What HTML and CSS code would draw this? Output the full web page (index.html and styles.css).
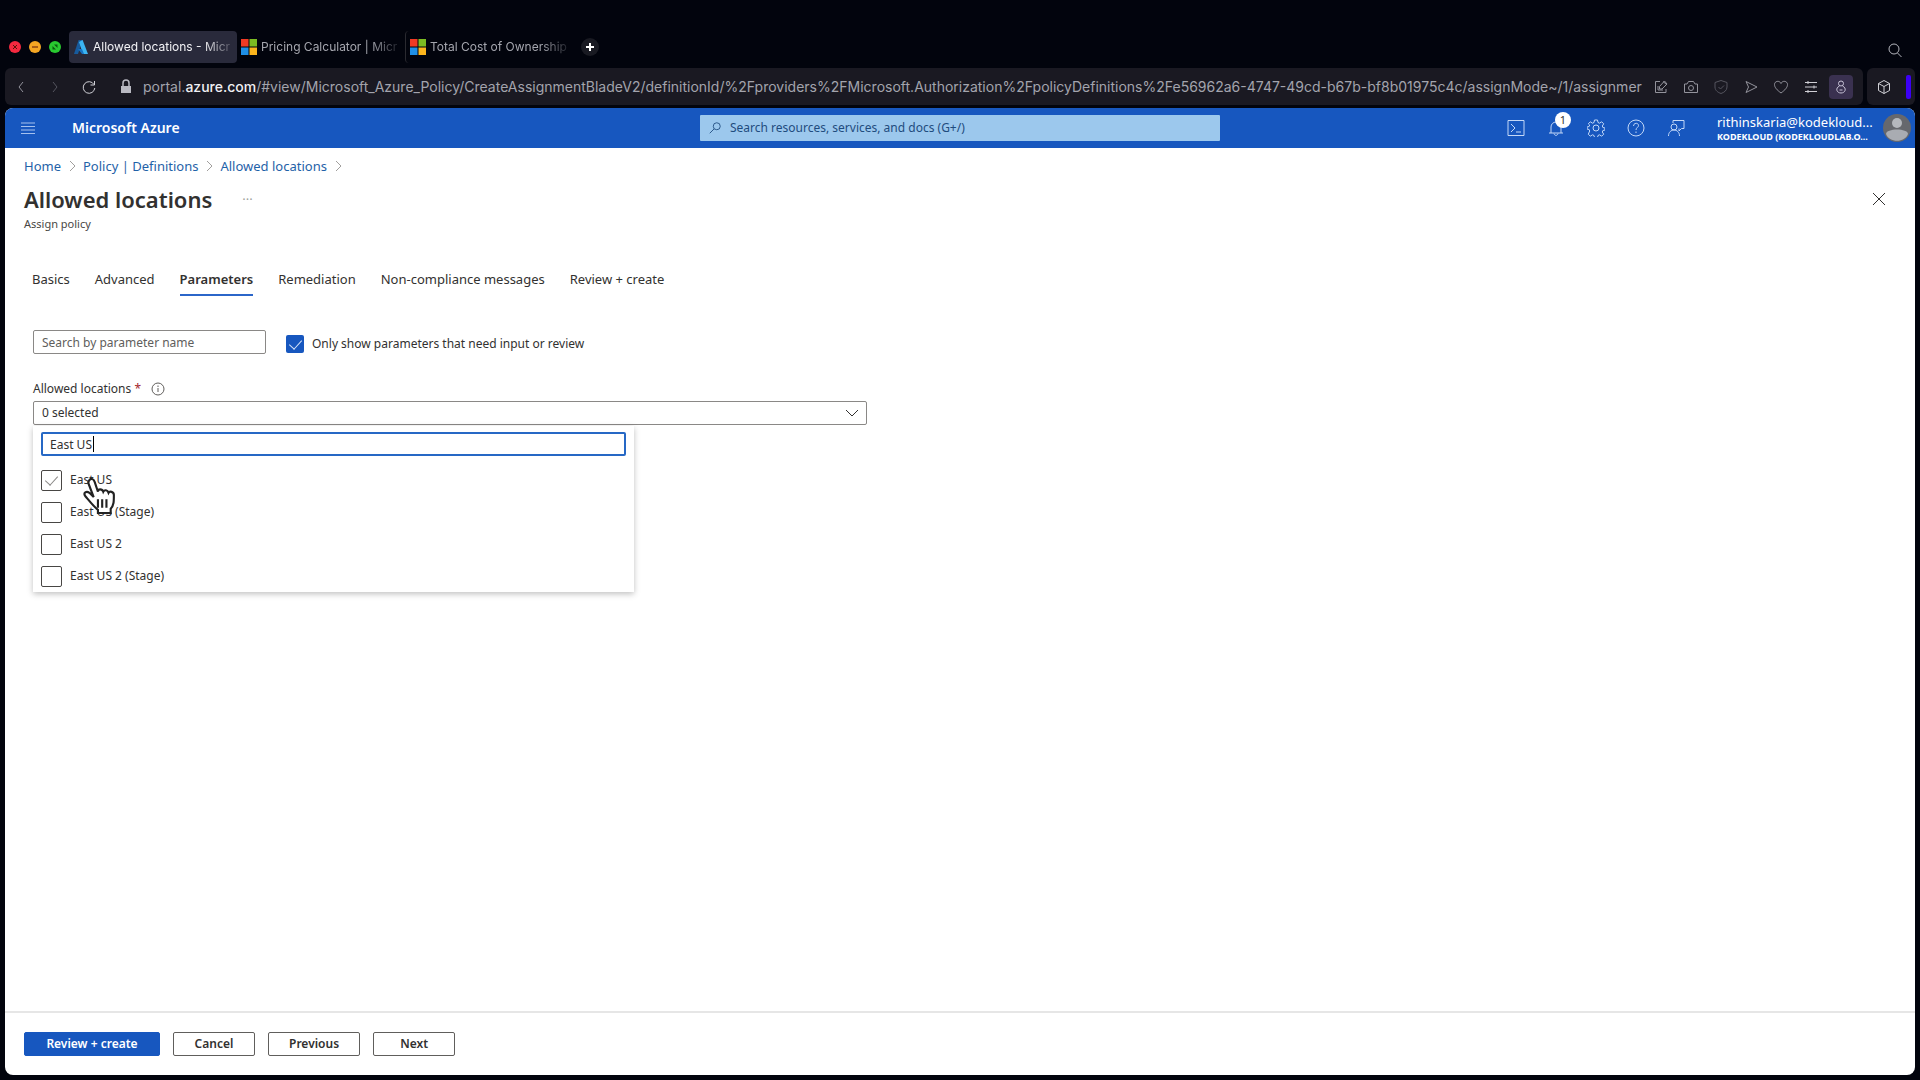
FILE: index.html
```html
<!DOCTYPE html>
<html lang="en">
<head>
    <meta charset="utf-8">
    <title>Allowed locations - Microsoft Azure</title>
    <link rel="stylesheet" href="styles.css">
</head>
<body>

<div class="tab-strip">
    <div class="lights">
        <button class="light red" aria-label="Close window"><svg viewBox="0 0 12 12"><path d="M4 4l4 4M8 4l-4 4"/></svg></button>
        <button class="light yellow" aria-label="Minimize window"><svg viewBox="0 0 12 12"><path d="M3 6h6"/></svg></button>
        <button class="light green" aria-label="Zoom window"><svg viewBox="0 0 12 12"><path fill="currentColor" stroke="none" d="M3.500 5v3.500H7zM5 3.500h3.500V7z"/></svg></button>
    </div>
    <div class="tabs">
        <a href="#" class="tab active">
            <svg class="favicon" viewBox="0 0 16 16"><path fill="#175a9c" d="M5.600 1h4L5 15H1z"/><path fill="#3bb4f2" d="M9.600 1l5.400 14H10L6 3z"/><path fill="#1673c4" d="M5 10h4l2 5H9z"/></svg>
            <span>Allowed locations - Micr</span>
        </a>
        <a href="#" class="tab">
            <svg class="favicon" viewBox="0 0 16 16"><path fill="#f03a24" d="M0 0h7.500v7.500H0z"/><path fill="#7cbb22" d="M8.500 0H16v7.500H8.500z"/><path fill="#1f8fe6" d="M0 8.500h7.500V16H0z"/><path fill="#fcb51c" d="M8.500 8.500H16V16H8.500z"/></svg>
            <span>Pricing Calculator | Micr</span>
        </a>
        <a href="#" class="tab divided">
            <svg class="favicon" viewBox="0 0 16 16"><path fill="#f03a24" d="M0 0h7.500v7.500H0z"/><path fill="#7cbb22" d="M8.500 0H16v7.500H8.500z"/><path fill="#1f8fe6" d="M0 8.500h7.500V16H0z"/><path fill="#fcb51c" d="M8.500 8.500H16V16H8.500z"/></svg>
            <span>Total Cost of Ownership</span>
        </a>
    </div>
    <button class="new-tab" aria-label="New tab"><svg viewBox="0 0 16 16"><path d="M8 4v8M4 8h8"/></svg></button>
    <button class="tab-search" aria-label="Search tabs"><svg viewBox="0 0 16 16"><circle cx="7" cy="7" r="5"/><path d="M10.500 11l4 4"/></svg></button>
</div>

<div class="toolbar">
    <div class="address">
        <div class="nav">
            <button aria-label="Back"><svg viewBox="0 0 16 16"><path d="M10 3L6 8l4 5"/></svg></button>
            <button class="dim" aria-label="Forward"><svg viewBox="0 0 16 16"><path d="M6 3l4 5-4 5"/></svg></button>
            <button class="bright" aria-label="Reload"><svg viewBox="0 0 16 16"><path d="M13 5.500A5.800 5.800 0 1 0 13.800 9M13.500 2v4H9.500"/></svg></button>
        </div>
        <svg class="lock" viewBox="0 0 16 16"><path fill="#b9b9c2" d="M3 7h10v7H3z"/><path fill="none" stroke="#b9b9c2" stroke-width="1.500" d="M5 7V4a3 3 0 0 1 6 0v3"/></svg>
        <div class="url">portal.<b>azure.com</b>/#view/Microsoft_Azure_Policy/CreateAssignmentBladeV2/definitionId/%2Fproviders%2FMicrosoft.Authorization%2FpolicyDefinitions%2Fe56962a6-4747-49cd-b67b-bf8b01975c4c/assignMode~/1/assignmer</div>
        <div class="tools">
            <button aria-label="Share"><svg viewBox="0 0 16 16"><path d="M7 2.500H2.500v11H13V10M10 2.500l3.500 3M11.500 2L6.500 7.500V10H9l5-5zM5 7v4h5"/></svg></button>
            <button aria-label="Snapshot"><svg viewBox="0 0 16 16"><path d="M1.500 5H4l1.500-2.500h5L12 5h2.500v8.500h-13z"/><circle cx="8" cy="9" r="2.500"/></svg></button>
            <button class="dim" aria-label="Ad blocker"><svg viewBox="0 0 16 16"><path d="M8 1.500l6 2V8c0 3.500-3 5.500-6 6.500C5 13.500 2 11.500 2 8V3.500zM5.500 8l2 2 3.500-3.500"/></svg></button>
            <button aria-label="Send"><svg viewBox="0 0 16 16"><path d="M3 2.500L14 8 3 13.500 5.500 8z"/></svg></button>
            <button aria-label="Favourite"><svg viewBox="0 0 16 16"><path d="M8 14C4 11 1.500 8.500 1.500 5.500c0-3.500 5-4.500 6.500-1 1.500-3.500 6.500-2.500 6.500 1C14.500 8.500 12 11 8 14z"/></svg></button>
            <button class="bright" aria-label="Settings"><svg viewBox="0 0 16 16"><path d="M2 3.500h12M2 8h12M2 12.500h12M5 2v3M11 6.500v3M5 11v3"/></svg></button>
            <button class="boxed" aria-label="Profile"><svg viewBox="0 0 16 16"><circle cx="8" cy="4.500" r="2.500"/><path d="M6.500 7C2 9 3.500 14 8 14s6-5 1.500-7M6.500 11h3"/></svg></button>
        </div>
    </div>
    <div class="extensions">
        <button class="bright" aria-label="Extensions"><svg viewBox="0 0 16 16"><path d="M8 1.500l5.500 3v7L8 14.500l-5.500-3v-7zM2.500 4.500L8 7.500l5.500-3M8 7.500v7"/></svg></button>
        <span class="marker"></span>
    </div>
</div>

<div class="portal">
    <header class="portal-bar">
        <button class="menu" aria-label="Show portal menu"><svg viewBox="0 0 16 16"><path d="M1 3h14M1 6.500h14M1 10h14M1 13.500h14"/></svg></button>
        <a href="#" class="brand">Microsoft Azure</a>
        <label class="search">
            <svg viewBox="0 0 16 16"><circle cx="10" cy="6" r="4"/><path d="M7 9l-5 5"/></svg>
            <input type="text" aria-label="Search resources" placeholder="Search resources, services, and docs (G+/)">
        </label>
        <div class="actions">
            <div class="icons">
                <button aria-label="Cloud Shell"><svg viewBox="0 0 18 18"><path d="M1 1.500h16v15H1zM4 5l4 4-4 4M9 13h5"/></svg></button>
                <button aria-label="Notifications"><svg viewBox="0 0 18 18"><path d="M2 14h14M4 14V8a5 5 0 0 1 10 0v6M7 14.500c.5 2.500 3.500 2.500 4 0"/></svg><span class="badge">1</span></button>
                <button aria-label="Settings"><svg viewBox="0 0 18 18"><path d="M7.500 1h3l.5 2.500 1.500.7 2.200-1.400 2 2-1.400 2.200.6 1.500 2.100.5v2l-2.100.5-.6 1.500 1.400 2.200-2 2-2.200-1.400-1.500.7-.5 2h-3l-.5-2-1.500-.7-2.200 1.400-2-2L2.700 12l-.6-1.500L0 10V8l2.100-.5L2.700 6 1.300 4.800l2-2 2.200 1.400L7 3.500z"/><circle cx="9" cy="9" r="3"/></svg></button>
                <button aria-label="Help"><svg viewBox="0 0 18 18"><circle cx="9" cy="9" r="8"/><path d="M6.500 7c0-3.500 5-3.500 5-.5 0 2-2.500 2-2.500 4.500M9 12.500V14"/></svg></button>
                <button aria-label="Feedback"><svg viewBox="0 0 18 18"><path d="M6 4V1.500h11v8h-2.500L12 12V9.500"/><circle cx="7" cy="8" r="3"/><path d="M1.500 17c0-8 11-8 11 0"/></svg></button>
            </div>
            <button class="account">
                <span class="who">
                    <span class="mail">rithinskaria@kodekloud...</span>
                    <span class="org">KODEKLOUD (KODEKLOUDLAB.O...</span>
                </span>
                <svg viewBox="0 0 28 28"><circle cx="14" cy="14" r="14" fill="#66686d"/><circle cx="14" cy="9" r="5" fill="#b5b8bd"/><path fill="#a9acb2" d="M3 20c0-6 22-6 22 0-3 9-19 9-22 0z"/></svg>
            </button>
        </div>
    </header>

    <nav class="breadcrumb">
        <a href="#">Home</a>
        <svg viewBox="0 0 8 12"><path d="M2 1l5 5-5 5"/></svg>
        <a href="#">Policy | Definitions</a>
        <svg viewBox="0 0 8 12"><path d="M2 1l5 5-5 5"/></svg>
        <a href="#">Allowed locations</a>
        <svg viewBox="0 0 8 12"><path d="M2 1l5 5-5 5"/></svg>
    </nav>

    <div class="title-row">
        <h1>Allowed locations</h1>
        <button class="more" aria-label="More">&middot;&middot;&middot;</button>
        <button class="close" aria-label="Close"><svg viewBox="0 0 14 14"><path d="M1 1l12 12M13 1L1 13"/></svg></button>
    </div>
    <p class="subtitle">Assign policy</p>

    <nav class="steps">
        <a href="#">Basics</a>
        <a href="#">Advanced</a>
        <a href="#" class="current">Parameters</a>
        <a href="#">Remediation</a>
        <a href="#">Non-compliance messages</a>
        <a href="#">Review + create</a>
    </nav>

    <main>
        <div class="filters">
            <input type="text" class="field" aria-label="Search by parameter name" placeholder="Search by parameter name">
            <label class="check"><input type="checkbox" class="solid" checked>Only show parameters that need input or review</label>
        </div>

        <div class="caption">
            <label for="locations">Allowed locations <span class="required">*</span></label>
            <svg viewBox="0 0 14 14"><circle cx="7" cy="7" r="6"/><path d="M7 6v4M7 3.500V5"/></svg>
        </div>
        <div class="picker">
            <select id="locations"><option>0 selected</option></select>
            <svg class="chevron" viewBox="0 0 14 8"><path d="M1 1l6 6 6-6"/></svg>
            <div class="dropdown">
                <div class="typed">
                    <input type="text" aria-label="Filter locations" value="East US">
                    <span class="caret"></span>
                </div>
                <label class="option"><input type="checkbox" checked>East US</label>
                <label class="option"><input type="checkbox">East US (Stage)</label>
                <label class="option"><input type="checkbox">East US 2</label>
                <label class="option"><input type="checkbox">East US 2 (Stage)</label>
                <!-- hand pointer -->
                <svg class="pointer" viewBox="0 0 32 36"><path d="M7 3C9 1 11 2 12 5l3 9c0-3 4-3 5 0 1-2 4-2 5 1 1-2 5-1 5 2 0 6 0 10-3 13v4H15v-3c-4-3-7-7-12-13-2-3 1-5 4-3l4 4L6 6c0-1 0-2 1-3z"/><path d="M15 21v8M19 21v8M23 21v8"/></svg>
            </div>
        </div>
    </main>

    <footer>
        <button class="btn primary">Review + create</button>
        <button class="btn">Cancel</button>
        <button class="btn">Previous</button>
        <button class="btn">Next</button>
    </footer>
</div>

</body>
</html>
```
FILE: styles.css
```css
* {
    box-sizing: border-box;
}

body {
    margin: 0;
    padding: 28px 5px 5px;
    min-height: 100vh;
    display: flex;
    flex-direction: column;
    background: #02040d;
    color: #323130;
    font: 12px/16px "Noto Sans", "Open Sans", sans-serif;
}

button, input, select {
    font: inherit;
    color: inherit;
    margin: 0;
    padding: 0;
}

button {
    display: flex;
    align-items: center;
    justify-content: center;
    background: none;
    border: 0;
}

a {
    color: inherit;
    text-decoration: none;
}

svg {
    flex: none;
    fill: none;
    stroke: currentColor;
}

/* browser window */
.tab-strip {
    display: flex;
    align-items: center;
    height: 38px;
    padding: 0 12px 0 4px;
    color: #a5a6ae;
    font-family: Inter, sans-serif;
}

.lights {
    display: flex;
    gap: 8px;
    width: 60px;
}

.light {
    width: 12px;
    height: 12px;
    border-radius: 50%;
    color: #5a1408;
}

.light svg {
    width: 12px;
    height: 12px;
}

.red { background: #f5293f; }
.yellow { background: #f5a623; }
.green { background: #29c930; color: #0b5a10; }

.tabs {
    display: flex;
}

.tab {
    display: flex;
    align-items: center;
    gap: 4px;
    width: 168px;
    height: 32px;
    padding: 0 4px;
    border-radius: 4px;
}

.tab span {
    white-space: nowrap;
    -webkit-mask-image: linear-gradient(to right, #000 80%, rgba(0, 0, 0, .2));
    mask-image: linear-gradient(to right, #000 80%, rgba(0, 0, 0, .2));
}

.tab.active {
    background: #292a3b;
    color: #f2f2f5;
}

.tab.divided {
    border-left: 1px solid #2a2a30;
}

.favicon {
    width: 16px;
    height: 16px;
    stroke: none;
}

.new-tab {
    width: 18px;
    height: 18px;
    margin-left: 8px;
    border-radius: 50%;
    background: #191a22;
    color: #fff;
    stroke-width: 2;
}

.tab-search {
    margin-left: auto;
    margin-top: 6px;
    color: #b4b5bc;
}

.new-tab svg, .tab-search svg {
    width: 16px;
    height: 16px;
}

.toolbar {
    display: flex;
    gap: 4px;
    height: 42px;
    padding-top: 2px;
    padding-bottom: 3px;
}

.address, .extensions {
    display: flex;
    align-items: center;
    background: #1a1922;
    border-radius: 6px;
    color: #93939c;
}

.address {
    flex: 1;
    min-width: 0;
    overflow: hidden;
    padding: 0 14px 0 8px;
}

.toolbar svg {
    width: 16px;
    height: 16px;
}

.nav {
    display: flex;
    gap: 18px;
}

.dim { color: #55555f; }
.bright { color: #d0d0d6; }

.toolbar .lock {
    margin: 0 9px 0 21px;
    stroke: none;
}

.url {
    flex: 1;
    min-width: 0;
    white-space: nowrap;
    font: 14px/20px Inter, sans-serif;
    color: #a3a4ad;
}

.url b {
    font-weight: 500;
    color: #f0f0f4;
}

.tools {
    display: flex;
    align-items: center;
    gap: 14px;
    padding-left: 8px;
}

.boxed {
    width: 24px;
    height: 24px;
    margin: 0 -4px;
    border-radius: 4px;
    background: #3a3150;
    color: #c9c4d8;
}

.extensions {
    width: 48px;
    justify-content: flex-end;
    gap: 14px;
    padding-right: 4px;
}

.marker {
    width: 5px;
    height: 24px;
    border-radius: 2px;
    background: #3c00f5;
}

/* portal */
.portal {
    flex: 1;
    display: flex;
    flex-direction: column;
    overflow: hidden;
    background: #fff;
    border-radius: 8px;
}

.portal-bar {
    display: grid;
    grid-template-columns: 1fr 520px 1fr;
    align-items: center;
    position: relative;
    height: 40px;
    background: #1757bf;
    color: #fff;
}

.portal-bar svg {
    width: 18px;
    height: 18px;
}

.portal-bar .menu {
    position: absolute;
    left: 15px;
    color: #a5c1ee;
}

.portal-bar .menu svg {
    width: 16px;
    height: 16px;
}

.brand {
    padding-left: 67px;
    font-size: 14px;
    font-weight: 600;
}

.search {
    display: flex;
    align-items: center;
    gap: 8px;
    height: 26px;
    padding: 0 8px;
    border-radius: 1px;
    background: #9cc8ed;
    color: #1f4c7e;
}

.portal-bar .search svg {
    width: 14px;
    height: 14px;
}

.search input {
    flex: 1;
    border: 0;
    background: none;
    outline: 0;
}

.search input::placeholder {
    color: #1f4c7e;
}

.actions, .icons, .account {
    display: flex;
    align-items: center;
}

.actions {
    justify-content: flex-end;
    gap: 32px;
    padding-right: 4px;
}

.icons {
    gap: 22px;
    color: #c3d8f7;
}

.icons button {
    position: relative;
}

.badge {
    position: absolute;
    left: 8px;
    top: -7px;
    width: 16px;
    height: 16px;
    border-radius: 50%;
    background: #fff;
    color: #323130;
    font-size: 11px;
    line-height: 16px;
}

.account {
    gap: 8px;
    text-align: left;
}

.portal-bar .account svg {
    width: 28px;
    height: 28px;
    stroke: none;
}

.who {
    width: 158px;
    white-space: nowrap;
}

.mail, .org {
    display: block;
}

.mail {
    font-size: 13px;
    line-height: 18px;
}

.org {
    font-size: 9px;
    line-height: 12px;
    font-weight: 700;
}

.breadcrumb {
    display: flex;
    align-items: center;
    gap: 7px;
    padding: 9px 19px 0;
    font-size: 13px;
    line-height: 18px;
    color: #1f62a8;
}

.breadcrumb svg {
    width: 8px;
    height: 12px;
    color: #a19f9d;
}

.title-row {
    display: flex;
    align-items: center;
    padding: 9px 29px 0 19px;
}

h1 {
    margin: 0;
    font-size: 22px;
    line-height: 30px;
    font-weight: 600;
}

.more {
    margin-left: 30px;
    color: #a19f9d;
    font-size: 13px;
}

.close {
    margin-left: auto;
    color: #323130;
}

.close svg {
    width: 14px;
    height: 14px;
}

.subtitle {
    margin: 2px 19px 0;
    font-size: 11px;
    color: #484644;
}

.steps {
    display: flex;
    gap: 25px;
    padding: 38px 27px 0;
    font-size: 13px;
    line-height: 18px;
}

.steps a {
    padding-bottom: 6px;
    border-bottom: 2px solid transparent;
}

.steps .current {
    border-color: #2b66c9;
    font-weight: 600;
}

main {
    flex: 1;
    padding: 34px 28px;
}

.filters {
    display: flex;
    align-items: center;
    gap: 20px;
}

.field {
    width: 233px;
    height: 24px;
    padding: 0 8px;
    border: 1px solid #8a8886;
    border-radius: 2px;
}

.field::placeholder {
    color: #605e5c;
}

.check {
    display: flex;
    align-items: center;
    gap: 8px;
    padding-top: 4px;
}

input[type="checkbox"] {
    appearance: none;
    display: flex;
    justify-content: center;
    width: 21px;
    height: 21px;
    border: 1px solid #484644;
    border-radius: 2px;
    background: #fff;
    color: #8a8886;
}

input[type="checkbox"]:checked::after {
    content: "";
    width: 6px;
    height: 11px;
    margin-top: 2px;
    border: solid currentColor;
    border-width: 0 1px 1px 0;
    transform: rotate(42deg);
}

input[type="checkbox"].solid {
    width: 18px;
    height: 18px;
    border: 0;
    background: #1757bf;
    color: #d6e4fa;
}

.caption {
    display: flex;
    align-items: center;
    gap: 10px;
    margin-top: 27px;
}

.caption svg {
    width: 14px;
    height: 14px;
    color: #605e5c;
}

.required {
    color: #a4262c;
}

.picker {
    position: relative;
    width: 45%;
    margin-top: 4px;
}

select {
    appearance: none;
    display: block;
    width: 100%;
    height: 24px;
    padding: 0 8px;
    border: 1px solid #8a8886;
    border-radius: 2px;
    background: #fff;
}

.chevron {
    position: absolute;
    right: 8px;
    top: 8px;
    width: 14px;
    height: 8px;
}

.dropdown {
    position: absolute;
    left: 0;
    top: 25px;
    width: 601px;
    padding: 6px 8px 0;
    background: #fff;
    box-shadow: 0 2px 6px rgba(0, 0, 0, .25);
}

.typed {
    position: relative;
    margin-bottom: 8px;
}

.typed input {
    display: block;
    width: 100%;
    height: 24px;
    padding: 0 7px;
    border: 2px solid #2668c5;
    border-radius: 2px;
    outline: 0;
}

.caret {
    position: absolute;
    left: 52px;
    top: 4px;
    width: 1px;
    height: 16px;
    background: #000;
}

.option {
    display: flex;
    align-items: center;
    gap: 8px;
    height: 32px;
}

.pointer {
    position: absolute;
    left: 49px;
    top: 50px;
    width: 34px;
    height: 40px;
    fill: #fff;
    color: #222;
    stroke-width: 2;
}

footer {
    display: flex;
    gap: 13px;
    padding: 19px;
    border-top: 2px solid #e6e6e6;
}

.btn {
    min-width: 82px;
    height: 24px;
    padding: 0 20px;
    border: 1px solid #605e5c;
    border-radius: 2px;
    font-weight: 600;
}

.primary {
    min-width: 136px;
    border-color: #1757bf;
    background: #1757bf;
    color: #fff;
}
```
